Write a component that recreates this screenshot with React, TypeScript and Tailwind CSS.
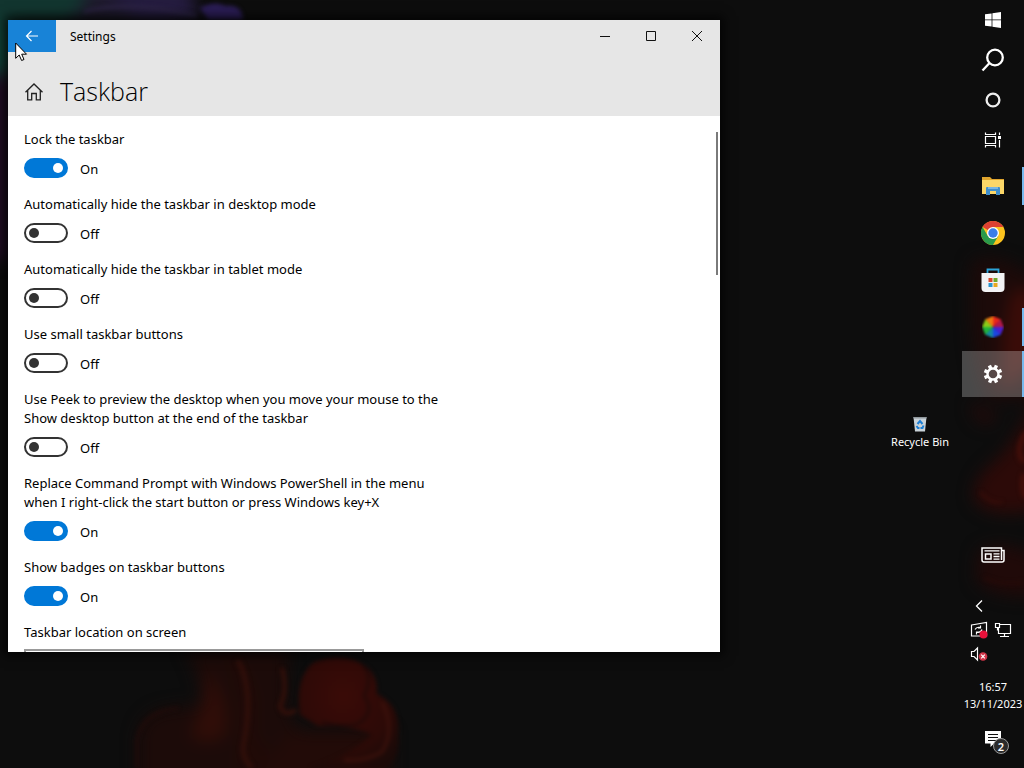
import React, { useState } from 'react';

const settings = [
  { id: 'lock', label: 'Lock the taskbar', on: true },
  { id: 'hide-desktop', label: 'Automatically hide the taskbar in desktop mode', on: false },
  { id: 'hide-tablet', label: 'Automatically hide the taskbar in tablet mode', on: false },
  { id: 'small', label: 'Use small taskbar buttons', on: false },
  {
    id: 'peek',
    label: 'Use Peek to preview the desktop when you move your mouse to the Show desktop button at the end of the taskbar',
    on: false,
  },
  {
    id: 'powershell',
    label: 'Replace Command Prompt with Windows PowerShell in the menu when I right-click the start button or press Windows key+X',
    on: true,
  },
  { id: 'badges', label: 'Show badges on taskbar buttons', on: true },
];

const Wallpaper = () => (
  <svg
    className="absolute inset-0 h-full w-full"
    viewBox="0 0 1024 768"
    preserveAspectRatio="xMidYMid slice"
    aria-hidden="true"
  >
    <defs>
      <filter id="soft" x="-40%" y="-40%" width="180%" height="180%" colorInterpolationFilters="sRGB">
        <feGaussianBlur stdDeviation="8" />
      </filter>
      <filter id="fine" x="-40%" y="-40%" width="180%" height="180%" colorInterpolationFilters="sRGB">
        <feGaussianBlur stdDeviation="2" />
      </filter>
      <radialGradient id="ember" cx="0.45" cy="0.35" r="0.7">
        <stop offset="0" stopColor="#3a0b07" />
        <stop offset="0.7" stopColor="#2c0a07" />
        <stop offset="1" stopColor="#1c0a08" />
      </radialGradient>
    </defs>
    <rect width="1024" height="768" fill="#0d0d0d" />

    {/* teal and violet ink, top left */}
    <g filter="url(#soft)">
      <path d="M-20 -20H190L180 24H-20Z" fill="#1e1a2c" />
      <path d="M-20 -20H85Q90 14 60 24H-20Z" fill="#12352f" />
      <path d="M-20 20H14V75H-20Z" fill="#114238" />
      <path d="M-20 75H12V260H-20Z" fill="#220e25" />
      <path d="M100 -10H190L200 20H140Z" fill="#251c40" />
    </g>
    <g filter="url(#fine)">
      <path d="M200 8Q214 0 226 6Q242 4 243 20H208Z" fill="#2b1d56" />
      <path d="M84 12Q130 0 196 16" stroke="#2c2444" strokeWidth="3" fill="none" />
    </g>

    {/* red smoke under the window */}
    <g filter="url(#soft)">
      <path
        d="M138 790V735Q142 716 160 710Q190 704 204 706Q200 672 184 645H290Q280 710 300 730Q330 760 310 790Z"
        fill="#1c0b09"
      />
      <path d="M205 668Q232 700 225 735Q210 748 190 736Q206 700 205 668Z" fill="#300d08" />
      <path d="M236 655Q262 690 256 722Q256 750 290 768H236Q246 700 226 655Z" fill="#200a07" />
      <path d="M290 730H390V790H250Z" fill="#220b08" />
    </g>
    <g filter="url(#fine)">
      <path
        d="M300 715Q294 678 314 662Q346 650 368 668Q378 678 377 694Q402 706 398 738Q400 762 380 768H310Q350 755 372 735Q352 725 318 726Z"
        fill="url(#ember)"
      />
      <path d="M282 668Q288 690 280 706Q284 718 296 710" stroke="#34100a" strokeWidth="4" fill="none" />
      <path d="M362 664Q374 676 364 696Q376 712 358 724Q340 728 322 722" stroke="#1c0909" strokeWidth="2" fill="none" />
      <path d="M382 702Q396 730 382 752Q364 762 344 760" stroke="#3c110b" strokeWidth="3" fill="none" />
      <path d="M137 768V740Q142 712 178 708" stroke="#260c0a" strokeWidth="2" fill="none" />
      <path d="M238 660Q254 690 244 742Q240 756 252 768" stroke="#300f0a" strokeWidth="5" fill="none" />
    </g>

    {/* red smoke along the right edge */}
    <g filter="url(#soft)">
      <path d="M972 262Q1000 250 1040 280V400H990Q966 370 972 262Z" fill="#1c0a09" />
      <path d="M1012 290H1036V360L1004 390Q998 340 1012 290Z" fill="#3a0c08" />
      <path d="M1036 400Q1010 450 992 464Q972 480 974 500Q990 520 1036 510Z" fill="#2c0a08" />
      <path d="M972 400Q985 415 1000 412L990 424Q970 424 972 400Z" fill="#230a0a" />
      <path d="M978 552Q1000 536 1036 556V596Q990 598 976 580Z" fill="#200a09" />
    </g>
    <g filter="url(#fine)">
      <path d="M980 492Q990 504 1002 502" stroke="#3d0f0a" strokeWidth="2" fill="none" />
      <path d="M1026 432Q1014 452 1024 462M1024 474Q1020 488 1026 498" stroke="#440f09" strokeWidth="5" fill="none" />
      <path d="M984 578Q1004 586 1024 582" stroke="#2a0c09" strokeWidth="2" fill="none" />
    </g>
  </svg>
);

const ToggleRow = ({ id, label, on }: { id: string; label: string; on: boolean }) => {
  const [checked, setChecked] = useState(on);
  return (
    <div className="mb-[17px]">
      <label htmlFor={id} className="block text-[13px] leading-[19px]">
        {label}
      </label>
      <div className="mt-[9px] flex h-5 items-center gap-3">
        <input
          id={id}
          type="checkbox"
          role="switch"
          checked={checked}
          onChange={(e) => setChecked(e.target.checked)}
          className="h-5 w-11 shrink-0 appearance-none rounded-full border-2 border-[#333] bg-white p-[3px] before:block before:size-2.5 before:rounded-full before:bg-[#333] checked:border-[#0078d7] checked:bg-[#0078d7] checked:before:ml-6 checked:before:bg-white"
        />
        <span className="pt-0.5 text-[13px] leading-[19px]">{checked ? 'On' : 'Off'}</span>
      </div>
    </div>
  );
};

const WindowButton = ({ label, path }: { label: string; path: string }) => (
  <button aria-label={label} className="flex h-8 w-[46px] items-center justify-center">
    <svg width="12" height="12" viewBox="0 0 12 12" fill="none" stroke="#111">
      <path d={path} />
    </svg>
  </button>
);

const SettingsWindow = () => (
  <section className="flex min-w-0 flex-1 flex-col overflow-hidden bg-white text-black shadow-[0_0_10px_4px_rgba(0,0,0,0.7)]">
    <header className="shrink-0 bg-[#e6e6e6]">
      <div className="flex h-8">
        <button aria-label="Back" className="flex w-12 items-center justify-center bg-[#1883d7]">
          <svg width="14" height="12" viewBox="0 0 14 12" fill="none" stroke="#fff" strokeWidth="1.2">
            <path d="M13 6H1.5M6.5 1L1.5 6L6.5 11" />
          </svg>
        </button>
        <span className="flex-1 pt-px pl-3.5 text-xs leading-8">Settings</span>
        <WindowButton label="Minimize" path="M1 6.5H11" />
        <WindowButton label="Maximize" path="M1.5 1.5H10.5V10.5H1.5Z" />
        <WindowButton label="Close" path="M1 1L11 11M11 1L1 11" />
      </div>
      <div className="flex h-16 items-center gap-4 px-4">
        <a href="#home" aria-label="Home" className="pt-4">
          <svg width="20" height="20" viewBox="0 0 20 20" fill="none" stroke="#222" strokeWidth="1.3">
            <path d="M1.5 10.3L10 2L18.5 10.3M3.7 8.5V17.8H7.7V11.5H12.3V17.8H16.3V8.5" />
          </svg>
        </a>
        <h1 className="pt-3.5 font-['Open_Sans',sans-serif] text-[25px] leading-9 font-light">Taskbar</h1>
      </div>
    </header>
    <div className="flex min-h-0 flex-1">
      <div className="min-w-0 flex-1 overflow-hidden pt-3.5 pl-4">
        <div className="max-w-[430px]">
          {settings.map((s) => (
            <ToggleRow key={s.id} id={s.id} label={s.label} on={s.on} />
          ))}
          <label htmlFor="location" className="block text-[13px] leading-[19px]">
            Taskbar location on screen
          </label>
          <select
            id="location"
            defaultValue="Right"
            className="mt-[7px] h-8 w-[340px] appearance-none border-2 border-[#999] bg-white px-2 text-[13px]"
          >
            <option>Left</option>
            <option>Top</option>
            <option>Right</option>
            <option>Bottom</option>
          </select>
        </div>
      </div>
      <div className="w-1 pt-4">
        <div className="h-[143px] w-0.5 bg-[#7a7a7a]" />
      </div>
    </div>
  </section>
);

const SystemButton = ({ label, children }: { label: string; children: React.ReactNode }) => (
  <button aria-label={label} className="flex h-10 w-full items-center justify-center">
    {children}
  </button>
);

const AppButton = ({
  label,
  running,
  active,
  children,
}: {
  label: string;
  running?: boolean;
  active?: boolean;
  children: React.ReactNode;
}) => (
  <button
    aria-label={label}
    className={`relative mb-px flex h-[46px] w-full items-center justify-center ${active ? 'bg-white/25' : ''}`}
  >
    {children}
    {(running || active) && (
      <span className={`absolute right-0 w-0.5 bg-[#76b9ed] ${active ? 'inset-y-0' : 'inset-y-1'}`} />
    )}
  </button>
);

const hues = ['#e8261c', '#b0184a', '#4a1fd0', '#1c46e0', '#1488a0', '#22b43c', '#8ccc18', '#f07a10'];

// one pie slice of the colour wheel
const slice = (i: number) => {
  const a = ((i * 45 - 90) * Math.PI) / 180;
  const b = ((i * 45 - 43) * Math.PI) / 180;
  return `M12 12L${12 + 12 * Math.cos(a)} ${12 + 12 * Math.sin(a)}L${12 + 12 * Math.cos(b)} ${12 + 12 * Math.sin(b)}Z`;
};

const gearTeeth = [0, 45, 90, 135, 180, 225, 270, 315];

const Taskbar = () => (
  <nav className="relative flex w-[62px] shrink-0 flex-col text-white" aria-label="Taskbar">
    <SystemButton label="Start">
      <svg width="16" height="16" viewBox="0 0 16 16" fill="#fff">
        <path d="M0 2.3L6.6 1.4V7.5H0ZM7.4 1.3L16 0V7.5H7.4ZM0 8.3H6.6V14.6L0 13.7ZM7.4 8.3H16V16L7.4 14.7Z" />
      </svg>
    </SystemButton>
    <SystemButton label="Search">
      <svg width="24" height="24" viewBox="0 0 24 24" fill="none" stroke="#fff" strokeWidth="2.3">
        <circle cx="14" cy="9.5" r="7.8" />
        <path d="M8.3 15.2L1.5 22.5" />
      </svg>
    </SystemButton>
    <SystemButton label="Cortana">
      <svg width="16" height="16" viewBox="0 0 16 16" fill="none" stroke="#eee" strokeWidth="2.3">
        <circle cx="8" cy="8" r="6.4" />
      </svg>
    </SystemButton>
    <SystemButton label="Task View">
      <svg width="18" height="16" viewBox="0 0 18 16" fill="none" stroke="#fff" strokeWidth="1.2">
        <path d="M1.5 0.5V2.5H11.5V0.5M1.5 15.5V13.5H11.5V15.5M1.5 4.5H11.5V11.5H1.5ZM15.5 0.5V3M15.5 8V15.5" />
        <rect x="14" y="4" width="3" height="3" fill="#fff" stroke="none" />
      </svg>
    </SystemButton>

    <div className="mt-[3px]">
      <AppButton label="File Explorer" running>
        <svg width="22" height="20" viewBox="0 0 22 20">
          <path d="M0 1H8L10 3H22V18H0Z" fill="#e0a52e" />
          <path d="M0 4H22V18H0Z" fill="#fbd768" />
          <path d="M4 19V12Q4 11 5 11H17Q18 11 18 12V19H14V15H8V19Z" fill="#3f8ecb" />
          <path d="M6 11H16V13H6Z" fill="#78b6e4" />
        </svg>
      </AppButton>
      <AppButton label="Google Chrome">
        <svg width="24" height="24" viewBox="0 0 24 24">
          <circle cx="12" cy="12" r="12" fill="#fcc31e" />
          <path d="M12 12L1.6 6A12 12 0 0 1 22.4 6H12Z" fill="#dd4033" />
          <path d="M1.6 6A12 12 0 0 0 12 24L17.2 15L12 12L6.8 15Z" fill="#2a9a4a" />
          <circle cx="12" cy="12" r="6" fill="#fff" />
          <circle cx="12" cy="12" r="4.7" fill="#3b7de8" />
        </svg>
      </AppButton>
      <AppButton label="Microsoft Store">
        <svg width="24" height="24" viewBox="0 0 24 24">
          <path d="M6.5 6V1.5H17.5V6" fill="none" stroke="#2ba3d8" strokeWidth="1.8" />
          <path d="M0.5 5H23.5V20Q23.5 24 19.5 24H4.5Q0.5 24 0.5 20Z" fill="#f3f3f5" />
          <path d="M7.5 10H11.5V14H7.5Z" fill="#d9482b" />
          <path d="M12.5 10H16.5V14H12.5Z" fill="#6fa92c" />
          <path d="M7.5 15H11.5V19H7.5Z" fill="#2a95d0" />
          <path d="M12.5 15H16.5V19H12.5Z" fill="#e9a920" />
        </svg>
      </AppButton>
      <AppButton label="Color Picker" running>
        <svg width="22" height="22" viewBox="0 0 24 24">
          <defs>
            <filter id="blend" colorInterpolationFilters="sRGB">
              <feGaussianBlur stdDeviation="1" />
            </filter>
          </defs>
          <g filter="url(#blend)">
            {hues.map((c, i) => (
              <path key={c} d={slice(i)} fill={c} />
            ))}
          </g>
        </svg>
      </AppButton>
      <AppButton label="Settings" active>
        <svg width="20" height="20" viewBox="0 0 20 20">
          <circle cx="10" cy="10" r="5.5" fill="none" stroke="#fff" strokeWidth="2.4" />
          {gearTeeth.map((deg) => (
            <rect key={deg} x="8.3" y="0.8" width="3.4" height="3.5" fill="#fff" transform={`rotate(${deg + 22} 10 10)`} />
          ))}
        </svg>
      </AppButton>
    </div>

    <div className="mt-auto">
      <SystemButton label="News and interests">
        <svg width="24" height="16" viewBox="0 0 24 16" fill="none" stroke="#fff" strokeWidth="1.5">
          <path d="M20.5 3.5H23V13Q23 15 21 15H3Q1 15 1 13V1H20.5V13" />
          <path d="M3.5 3.8H18.5M12.5 6.8H18.5M12.5 9.5H18.5M12.5 12.2H18.5" strokeWidth="1.3" />
          <rect x="4.5" y="7" width="5.5" height="5" />
        </svg>
      </SystemButton>
      <div className="mt-[19px] grid grid-cols-[24px_24px] pl-[5px]">
        <button aria-label="Show hidden icons" className="flex h-6 items-center justify-center">
          <svg width="8" height="12" viewBox="0 0 8 12" fill="none" stroke="#fff" strokeWidth="1.3">
            <path d="M7 0.5L1.5 6L7 11.5" />
          </svg>
        </button>
        <span />
        <button aria-label="Windows Update" className="flex h-6 items-center justify-center">
          <svg width="18" height="18" viewBox="0 0 18 18" fill="none" stroke="#fff" strokeWidth="1.2">
            <path d="M1.5 4L16.5 1.5V15H1.5Z" />
            <path d="M5 8.5Q6.5 5.5 10.5 6.5M10.5 4.5V7H8M12 8.5Q11 12 6.5 11.2M6.5 13.5V11H9" />
            <circle cx="13.5" cy="13.5" r="4" fill="#e8113a" stroke="none" />
          </svg>
        </button>
        <button aria-label="Network" className="flex h-6 items-center justify-center">
          <svg width="18" height="16" viewBox="0 0 18 16" fill="none" stroke="#fff" strokeWidth="1.2">
            <path d="M6 2.5H16.5V11.5H4.5V6M1.5 1.5H5.5V5.5H1.5ZM10.5 11.5V14.5M6 14.5H15M3.5 5.5V8.5" />
          </svg>
        </button>
        <button aria-label="Volume muted" className="flex h-6 items-center justify-center">
          <svg width="18" height="16" viewBox="0 0 18 16" fill="none" stroke="#fff" strokeWidth="1.2">
            <path d="M1.5 5.5H4L7.5 2V14L4 10.5H1.5Z" />
            <circle cx="13" cy="10.5" r="4.3" fill="#d13448" stroke="none" />
            <path d="M11.2 8.7L14.8 12.3M14.8 8.7L11.2 12.3" />
          </svg>
        </button>
      </div>
      <button className="mt-3 w-full text-center text-[11px] leading-[17px]">
        <span className="block">16:57</span>
        <span className="block">13/11/2023</span>
      </button>
      <button aria-label="Notifications" className="relative flex h-[54px] w-full items-center justify-center pb-1">
        <svg width="16" height="16" viewBox="0 0 16 16">
          <path d="M0 0H16V12.5H9L5.5 16V12.5H0Z" fill="#fff" />
          <path d="M3 3.5H13M3 6.5H13M3 9.5H13" stroke="#111" strokeWidth="1.2" />
        </svg>
        <span className="absolute right-[15px] bottom-3.5 flex size-4 items-center justify-center rounded-full border border-[#999] bg-[#2b2b2b] text-[11px] leading-none font-semibold">
          2
        </span>
      </button>
    </div>
  </nav>
);

const App = () => (
  <div className="relative flex h-screen overflow-hidden bg-[#0d0d0d] font-['Noto_Sans','Open_Sans',sans-serif]">
    <Wallpaper />
    <main className="relative flex min-w-0 flex-1 pt-5 pb-[116px] pl-2">
      <SettingsWindow />
      <div className="flex w-[242px] shrink-0 flex-col items-end pt-[396px]">
        <button className="flex w-[84px] flex-col items-center gap-0.5 text-[11px] leading-4 text-white">
          <svg width="14" height="16" viewBox="0 0 14 16">
            <path d="M0.5 1H13.5L12 15.5H2Z" fill="#c9d2d8" />
            <path d="M0.5 1H13.5V2.5H0.5Z" fill="#8f979c" />
            <path d="M4.5 8L7 5L9.5 8M3.5 10L5 12H6.5M10.5 9.5L9.5 12H7.5" fill="none" stroke="#1c7fd6" strokeWidth="2" />
          </svg>
          Recycle Bin
        </button>
      </div>
    </main>
    <Taskbar />

    {/* mouse pointer */}
    <svg className="pointer-events-none absolute top-[42px] left-[15px]" width="13" height="20" viewBox="0 0 13 20">
      <path
        d="M0.7 1V16.3L4.2 13L6.6 18.5L9 17.5L6.7 12.2H11.5Z"
        fill="#fff"
        stroke="#000"
        strokeLinejoin="round"
      />
    </svg>
  </div>
);

export default App;
